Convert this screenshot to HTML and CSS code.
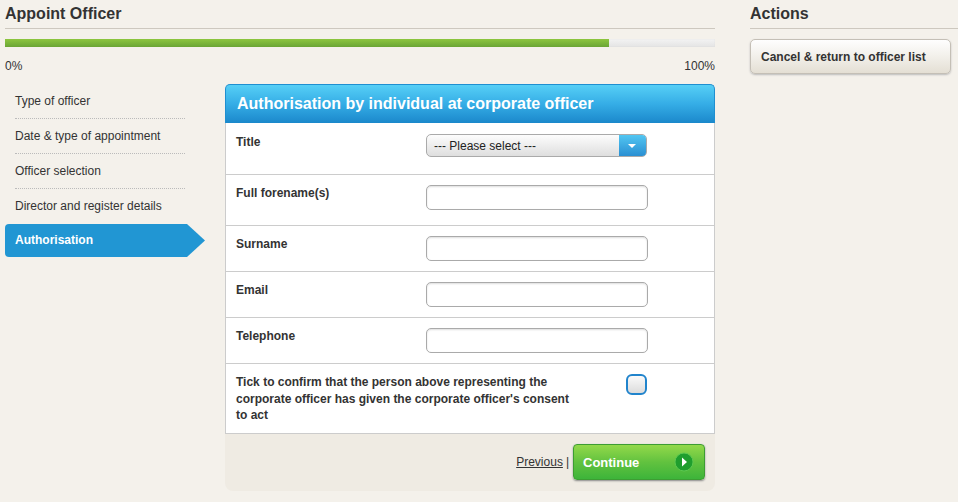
FILE: index.html
```html
<!DOCTYPE html>
<html lang="en">
<head>
  <meta charset="UTF-8" />
  <title>Appoint Officer</title>
  <link rel="stylesheet" href="styles.css">
</head>
<body>
  <div class="page">
    <div class="main">
      <h1>Appoint Officer</h1>
      <div class="progress"><div class="progress-fill" style="width: 85%"></div></div>
      <div class="progress-labels"><span>0%</span><span>100%</span></div>

      <div class="content">
        <ul class="steps">
          <li>Type of officer</li>
          <li>Date &amp; type of appointment</li>
          <li>Officer selection</li>
          <li>Director and register details</li>
          <li class="active">Authorisation</li>
        </ul>

        <div class="panel">
          <div class="panel-head">Authorisation by individual at corporate officer</div>
          <div class="panel-body">
            <div class="row tall">
              <label>Title</label>
              <div class="select">
                <span>--- Please select ---</span>
                <span class="select-btn"></span>
              </div>
            </div>
            <div class="row tall">
              <label>Full forename(s)</label>
              <div class="input"></div>
            </div>
            <div class="row">
              <label>Surname</label>
              <div class="input"></div>
            </div>
            <div class="row">
              <label>Email</label>
              <div class="input"></div>
            </div>
            <div class="row">
              <label>Telephone</label>
              <div class="input"></div>
            </div>
            <div class="row confirm">
              <label>Tick to confirm that the person above representing the corporate officer has given the corporate officer's consent to act</label>
              <div class="checkbox"></div>
            </div>
          </div>
          <div class="panel-foot">
            <a href="#" class="prev">Previous</a><span class="sep">|</span>
            <button class="continue">
              Continue
              <svg width="20" height="20" viewBox="0 0 20 20">
                <circle cx="10" cy="10" r="9" fill="#1f9e2e" stroke="#5cc850" stroke-width="1"/>
                <path d="M8 5.5 L13 10 L8 14.5 Z" fill="#fff"/>
              </svg>
            </button>
          </div>
        </div>
      </div>
    </div>

    <div class="aside">
      <h2>Actions</h2>
      <button class="action">Cancel &amp; return to officer list</button>
    </div>
  </div>
</body>
</html>
```

FILE: styles.css
```css
body {
  margin: 0;
  padding: 0;
  font-family: 'Liberation Sans', Arial, sans-serif;
  font-size: 12px;
  color: #333;
  background: #f4f1eb;
}

.page {
  display: flex;
  padding-left: 5px;
}

.main {
  width: 710px;
  flex: 0 0 710px;
}

h1, h2 {
  margin: 0;
  padding: 4px 0 4px;
  font-size: 16px;
  line-height: 20px;
  font-weight: bold;
  color: #333;
  border-bottom: 1px solid #cdc8bf;
}

.progress {
  margin-top: 10px;
  height: 8px;
  background: linear-gradient(#f3f3f3, #e4e4e4);
  box-shadow: 0 0 1px #ccc inset;
}

.progress-fill {
  height: 100%;
  background: linear-gradient(#8dc63f, #6aa535);
}

.progress-labels {
  display: flex;
  justify-content: space-between;
  margin-top: 12px;
  line-height: 15px;
}

.content {
  display: flex;
  gap: 20px;
  margin-top: 10px;
}

.steps {
  list-style: none;
  margin: 0;
  padding: 0;
  width: 200px;
  flex: 0 0 200px;
}

.steps li {
  margin: 0 20px 0 10px;
  height: 34px;
  line-height: 34px;
  border-bottom: 1px dotted #bbb;
}

.steps li:nth-child(4) {
  border-bottom: none;
}

.steps li.active {
  margin: 1px 0 0;
  padding-left: 10px;
  height: 33px;
  line-height: 33px;
  border: none;
  border-radius: 4px 0 0 4px;
  background: #2196d3;
  color: #fff;
  font-weight: bold;
  clip-path: polygon(0 0, 182px 0, 200px 50%, 182px 100%, 0 100%);
}

.panel {
  width: 490px;
}

.panel-head {
  height: 39px;
  box-sizing: border-box;
  padding: 10px 11px 0;
  border-radius: 5px 5px 0 0;
  background: linear-gradient(#56cff6, #35ade6 50%, #1b88cb);
  border: 1px solid #1f8fd0;
  border-bottom: none;
  color: #fff;
  font-size: 16px;
  font-weight: bold;
  line-height: 18px;
}

.panel-body {
  background: #fff;
  border: 1px solid #ccc;
  border-top: none;
}

.row {
  display: flex;
  box-sizing: border-box;
  height: 46px;
  padding: 10px 11px 0 10px;
  border-bottom: 1px solid #ccc;
}

.row:first-child {
  padding-top: 11px;
  height: 52px;
}

.row.tall {
  height: 51px;
}

.row.tall:first-child {
  height: 52px;
}

.row label {
  width: 190px;
  flex: 0 0 190px;
  font-weight: bold;
  line-height: 15px;
  padding-top: 1px;
}

.input {
  width: 222px;
  height: 25px;
  box-sizing: border-box;
  border: 1px solid #aaa;
  border-radius: 5px;
  background: #fff;
  box-shadow: 0 1px 2px #ddd inset;
}

.select {
  display: flex;
  align-items: center;
  width: 221px;
  height: 23px;
  box-sizing: border-box;
  border: 1px solid #aaa;
  border-radius: 5px;
  background: linear-gradient(#fdfdfd, #dedede);
  overflow: hidden;
}

.select span:first-child {
  flex: 1;
  padding-left: 7px;
  color: #222;
}

.select-btn {
  position: relative;
  width: 27px;
  height: 100%;
  background: linear-gradient(#52c6f2, #2a8fd2);
}

.select-btn::after {
  content: "";
  position: absolute;
  left: 9px;
  top: 9px;
  border-left: 4px solid transparent;
  border-right: 4px solid transparent;
  border-top: 4px solid #fff;
}

.row.confirm {
  height: 69px;
  border-bottom: none;
}

.row.confirm label {
  width: 345px;
  flex: 0 0 345px;
  line-height: 16.5px;
  padding-top: 0;
}

.checkbox {
  margin-left: 45px;
  width: 21px;
  height: 21px;
  box-sizing: border-box;
  border: 2px solid #2184cc;
  border-radius: 6px;
  background: linear-gradient(#fafafa, #dcdcdc);
}

.panel-foot {
  display: flex;
  justify-content: flex-end;
  align-items: center;
  padding: 10px 10px 11px;
  background: #efebe3;
  border-radius: 0 0 8px 8px;
}

.prev {
  color: #333;
  font-size: 12px;
}

.sep {
  margin: 0 4px 0 3px;
}

.continue {
  display: flex;
  align-items: center;
  justify-content: space-between;
  width: 132px;
  height: 36px;
  padding: 0 10px 0 9px;
  border: 1px solid #3d9d33;
  border-radius: 4px;
  background: linear-gradient(#93d94a, #62c23f 50%, #3db43a);
  box-shadow: 0 1px 2px #888;
  color: #fff;
  font-family: 'Liberation Sans', Arial, sans-serif;
  font-size: 13px;
  font-weight: bold;
  cursor: pointer;
}

.aside {
  flex: 1;
  margin-left: 35px;
}

.action {
  display: block;
  margin-top: 10px;
  width: 201px;
  height: 35px;
  padding: 0 10px;
  text-align: left;
  border: 1px solid #c4bfb6;
  border-radius: 5px;
  background: linear-gradient(#fefefe, #f3f1ec 45%, #e4dfd4);
  box-shadow: 0 1px 2px #bbb;
  color: #333;
  font-family: 'Liberation Sans', Arial, sans-serif;
  font-size: 12px;
  font-weight: bold;
  cursor: pointer;
}
```
